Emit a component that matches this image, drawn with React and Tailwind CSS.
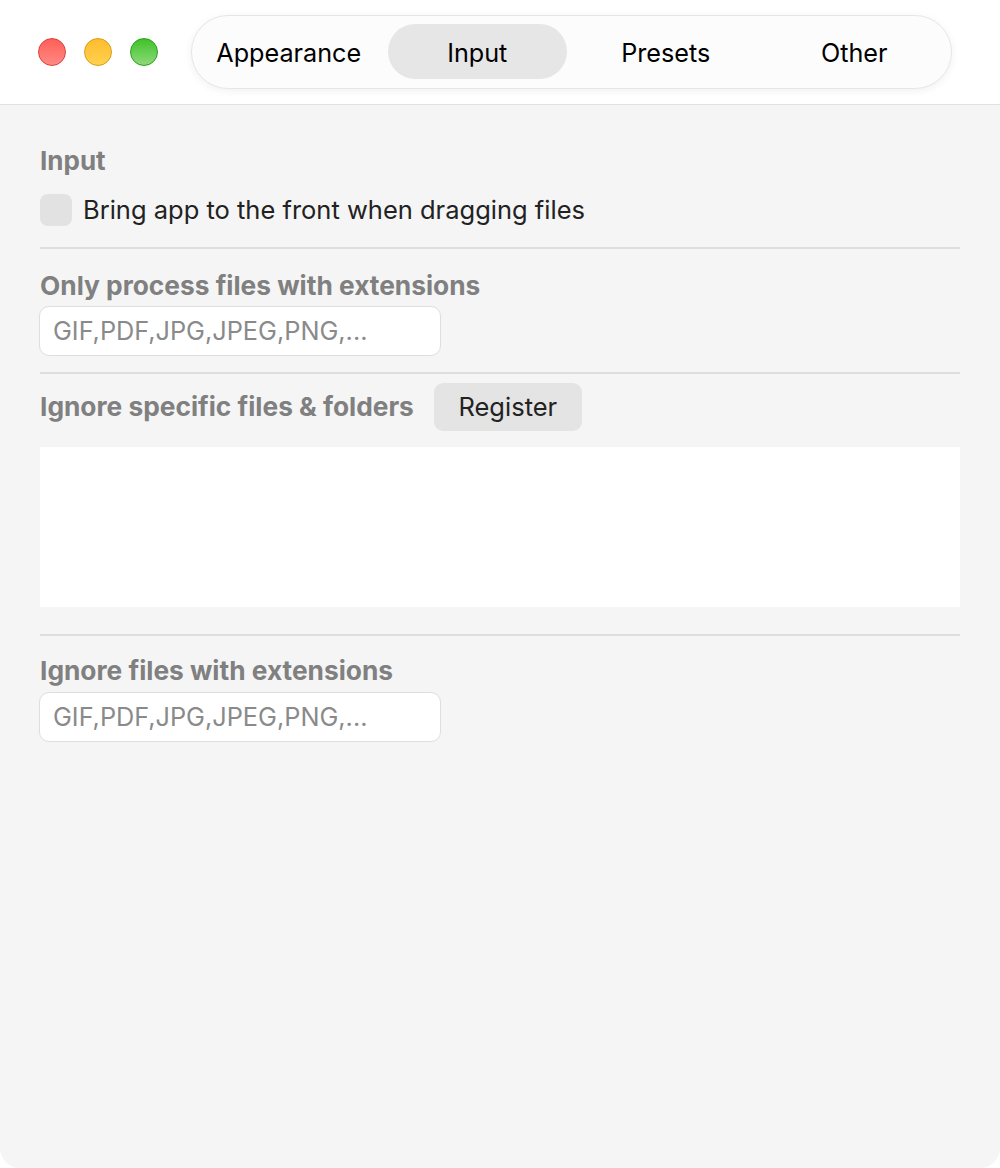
import React from "react";

const font = { fontFamily: "Inter, 'Noto Sans', 'Liberation Sans', sans-serif" };

function Light({ from, to, border }) {
  return (
    <div
      className="w-[28px] h-[28px] rounded-full border"
      style={{ background: `linear-gradient(to bottom, ${from}, ${to})`, borderColor: border }}
    />
  );
}

function Field() {
  return (
    <div className="w-[402px] h-[50px] bg-white border border-[#dedede] rounded-[10px] flex items-center pl-[13px] text-[25.3px] text-[#8a8a8a]">
      GIF,PDF,JPG,JPEG,PNG,...
    </div>
  );
}

export default function App() {
  const tabs = ["Appearance", "Input", "Presets", "Other"];
  return (
    <div className="w-[1000px] h-[1168px] bg-white" style={font}>
      <div className="w-full h-full rounded-[20px] overflow-hidden bg-[#f5f5f5] flex flex-col">
        <div className="h-[105px] bg-white border-b border-[#e2e2e2] flex items-center pl-[38px] shrink-0">
          <div className="flex gap-[18px]">
            <Light from="#ff5f57" to="#ff8a84" border="#d9413a" />
            <Light from="#febc2e" to="#ffd24f" border="#d89b17" />
            <Light from="#3fc22a" to="#8fd97a" border="#25a018" />
          </div>
          <div className="ml-[33px] mt-[-1px] w-[761px] h-[74px] rounded-full border border-[#e6e6e6] bg-[#fcfcfc] shadow-[0_2px_8px_rgba(0,0,0,0.06)] flex items-center px-[7px] gap-[9px]">
            {tabs.map((t) => (
              <div
                key={t}
                className={`w-[180px] h-[55px] rounded-full flex items-center justify-center text-[25.2px] text-black pt-[4px] ${
                  t === "Input" ? "bg-[#e6e6e6]" : ""
                }`}
              >
                {t}
              </div>
            ))}
          </div>
        </div>

        <div className="px-[40px] flex flex-col">
          <div className="mt-[41px] h-[30px] text-[26px] font-bold text-[#808080] leading-[30px]">Input</div>
          <div className="mt-[18px] h-[32px] flex items-center gap-[11px]">
            <div className="w-[32px] h-[32px] rounded-[8px] bg-[#e2e2e2]" />
            <span className="text-[25.5px] text-[#222222] leading-[32px]">Bring app to the front when dragging files</span>
          </div>
          <div className="mt-[21px] h-[2px] bg-[#dedede]" />

          <div className="mt-[22px] h-[30px] text-[26.3px] font-bold text-[#808080] leading-[30px] whitespace-nowrap">Only process files with extensions</div>
          <div className="mt-[5px] -ml-[1px]"><Field /></div>
          <div className="mt-[16px] h-[2px] bg-[#dedede]" />

          <div className="mt-[9px] h-[48px] flex items-center gap-[20px]">
            <span className="text-[26.3px] font-bold text-[#808080] leading-[30px] whitespace-nowrap">Ignore specific files &amp; folders</span>
            <div className="w-[148px] h-[48px] rounded-[9px] bg-[#e4e4e4] flex items-center justify-center text-[25.5px] text-[#222222]">
              Register
            </div>
          </div>
          <div className="mt-[16px] h-[160px] bg-white" />
          <div className="mt-[27px] h-[2px] bg-[#dedede]" />

          <div className="mt-[20px] h-[30px] text-[26.3px] font-bold text-[#808080] leading-[30px] whitespace-nowrap">Ignore files with extensions</div>
          <div className="mt-[6px] -ml-[1px]"><Field /></div>
        </div>
      </div>
    </div>
  );
}
